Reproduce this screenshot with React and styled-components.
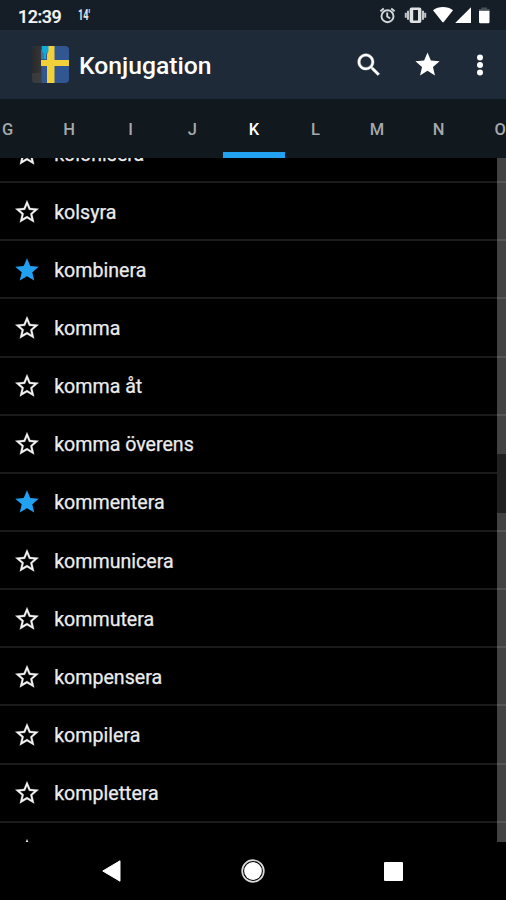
import styled, { createGlobalStyle } from "styled-components";

const tabs = ["G", "H", "I", "J", "K", "L", "M", "N", "O"];

const verbs = [
  { name: "kolonisera" },
  { name: "kolsyra" },
  { name: "kombinera", starred: true },
  { name: "komma" },
  { name: "komma åt" },
  { name: "komma överens" },
  { name: "kommentera", starred: true },
  { name: "kommunicera" },
  { name: "kommutera" },
  { name: "kompensera" },
  { name: "kompilera" },
  { name: "komplettera" },
  { name: "komplicera" },
];

const STAR =
  "M12 17.27L18.18 21l-1.64-7.03L22 9.24l-7.19-.61L12 2 9.19 8.63 2 9.24l5.46 4.73L5.82 21z";
const STAR_OUTLINE =
  "M22 9.24l-7.19-.62L12 2 9.19 8.63 2 9.24l5.46 4.73L5.82 21 12 17.27 18.18 21l-1.63-7.03L22 9.24zM12 15.4l-3.76 2.27 1-4.28-3.32-2.88 4.38-.38L12 6.1l1.71 4.04 4.38.38-3.32 2.88 1 4.28L12 15.4z";

function StatusIcons() {
  return (
    <svg width="112" height="20" viewBox="378 6 112 20" fill="#fff">
      {/* alarm */}
      <g fill="none" stroke="#d5d8da" strokeWidth="1.9">
        <circle cx="387.5" cy="16.2" r="6" />
        <path d="M387.2 12.5v4l3 2M380.4 11.2l3.4-2.8M394.6 11.2l-3.4-2.8" />
      </g>
      {/* vibrate */}
      <path
        fill="#dfe1e2"
        fillRule="evenodd"
        d="M411.6 7.6h7.800a2 2 0 0 1 2 2v11.400a2 2 0 0 1-2 2h-7.800a2 2 0 0 1-2-2V9.600a2 2 0 0 1 2-2zM413.200 10v10.600h4.800V10z"
      />
      <path
        d="M408 10.800v9M405.800 12.800v5M423 10.800v9M425.200 12.800v5"
        stroke="#c3c7ca"
        strokeWidth="2"
      />
      {/* wifi */}
      <path d="M433 10.200c5.600-4.200 14.400-4.200 20 0L443.500 22.300h-1z" />
      {/* signal */}
      <path d="M471 7.200V23h-15.800z" />
      {/* battery */}
      <path d="M479 10.600h10.500V22a1.200 1.200 0 0 1-1.200 1.200h-8.100A1.200 1.200 0 0 1 479 22z" />
      <path d="M481.500 7.400h5.500v1.600h2.500v1.600h-10.500V9h2.500z" fill="#46515a" />
    </svg>
  );
}

function AppIcon() {
  return (
    <svg width="37" height="37" viewBox="0 0 37 37">
      <defs>
        <linearGradient id="edge">
          <stop offset="0" stopColor="#26292e" />
          <stop offset="1" stopColor="#383634" />
        </linearGradient>
        <clipPath id="rounded">
          <rect width="37" height="37" rx="4" />
        </clipPath>
      </defs>
      <g clipPath="url(#rounded)">
        <rect width="37" height="37" fill="#315793" />
        <rect width="9.500" height="37" fill="url(#edge)" />
        <path d="M0 27h9.500v10H0z" fill="#444546" opacity="0.6" />
        <path d="M10 0h7v5l-3 3v5h-2L10 6z" fill="#12a9dc" />
        <path d="M9 3l3 5v5H9z" fill="#3977a6" />
        <path d="M16.500 0h6v14H37v6H22.500v17H15V20H9v-6h6V8l1.500-3z" fill="#f2d03a" />
      </g>
    </svg>
  );
}

function Star({ filled, size = 28 }) {
  return (
    <svg width={size} height={size} viewBox="0 0 24 24" fill="currentColor">
      <path d={filled ? STAR : STAR_OUTLINE} />
    </svg>
  );
}

function App() {
  return (
    <Screen>
      <GlobalStyle />
      <StatusBar>
        <Clock>12:39</Clock>
        <Temperature>14'</Temperature>
        <StatusIcons />
      </StatusBar>

      <Toolbar>
        <AppIcon />
        <Title>Konjugation</Title>
        <Actions>
          <Action $width={58}>
            <svg width="30" height="30" viewBox="0 0 24 24" fill="currentColor" stroke="currentColor" strokeWidth="0.300">
              <path d="M15.500 14h-.79l-.28-.27C15.410 12.590 16 11.110 16 9.500 16 5.910 13.090 3 9.500 3S3 5.910 3 9.500 5.910 16 9.500 16c1.610 0 3.090-.59 4.230-1.570l.27.28v.79l5 4.990L20.490 19l-4.990-5zm-6 0C7.010 14 5 11.990 5 9.500S7.010 5 9.500 5 14 7.010 14 9.500 11.990 14 9.500 14z" />
            </svg>
          </Action>
          <Action $width={60}>
            <Star filled size={29} />
          </Action>
          <Action $width={44}>
            <svg width="8" height="24" viewBox="0 0 8 24" fill="currentColor">
              <circle cx="4" cy="4.500" r="3" />
              <circle cx="4" cy="12" r="3" />
              <circle cx="4" cy="19.500" r="3" />
            </svg>
          </Action>
        </Actions>
      </Toolbar>

      <Tabs>
        {tabs.map((letter) => (
          <Tab key={letter} $active={letter === "K"}>
            {letter}
          </Tab>
        ))}
      </Tabs>

      <Content>
        <List>
          {verbs.map((verb) => (
            <Row key={verb.name}>
              <Favourite $on={verb.starred}>
                <Star filled={verb.starred} />
              </Favourite>
              <Verb>{verb.name}</Verb>
            </Row>
          ))}
        </List>
        <Scrollbar>
          <Thumb />
        </Scrollbar>
      </Content>

      <NavBar>
        <svg width="20" height="22" viewBox="0 0 20 22" fill="#fff">
          <path d="M18 .8v20.400L.8 11z" stroke="#fff" strokeLinejoin="round" />
        </svg>
        <svg width="24" height="24" viewBox="0 0 24 24">
          <circle cx="12" cy="12" r="10.800" fill="none" stroke="#dcdcdc" strokeWidth="1.700" />
          <circle cx="12" cy="12" r="8.900" fill="#fff" />
        </svg>
        <Recents />
      </NavBar>
    </Screen>
  );
}

export default App;

const GlobalStyle = createGlobalStyle`
  * {
    box-sizing: border-box;
  }

  body {
    margin: 0;
    background: #000;
    font-family: Roboto, sans-serif;
  }

  svg {
    display: block;
    flex-shrink: 0;
  }
`;

const Screen = styled.div`
  width: 506px;
  height: 900px;
  display: flex;
  flex-direction: column;
  overflow: hidden;
  background: #000;
  color: #fff;
`;

const StatusBar = styled.div`
  height: 30px;
  flex-shrink: 0;
  display: flex;
  align-items: center;
  padding: 2px 16px 0 18px;
  background: #151e27;

  svg {
    margin-left: auto;
  }
`;

const Clock = styled.div`
  width: 60px;
  font-size: 18px;
  letter-spacing: -0.5px;
  font-weight: 500;
  color: #f4f5f5;
  -webkit-text-stroke: 0.2px;
`;

const Temperature = styled.div`
  margin-top: -2px;
  font-size: 14px;
  font-weight: 700;
  color: #e2e4e5;
  transform: scaleX(0.66);
  transform-origin: left center;
`;

const Toolbar = styled.div`
  height: 69px;
  flex-shrink: 0;
  display: flex;
  align-items: center;
  padding-left: 32px;
  background: #1e2a38;
  border-bottom: 1px solid #1a2a3b;

  > svg {
    margin-top: 1px;
  }
`;

const Title = styled.div`
  margin: 3px 0 0 10px;
  font-size: 24.7px;
  font-weight: 500;
`;

const Actions = styled.div`
  display: flex;
  align-items: center;
  margin: 1px 0 0 auto;
`;

const Action = styled.div`
  width: ${({ $width }) => $width}px;
  display: flex;
  justify-content: center;
  margin-right: ${({ $width }) => ($width === 44 ? 4.5 : 0)}px;
`;

const Tabs = styled.div`
  height: 59px;
  flex-shrink: 0;
  display: flex;
  margin-left: -23.3px;
  background: #11181e;
`;

const Tab = styled.div`
  width: 61.6px;
  flex-shrink: 0;
  display: flex;
  align-items: center;
  justify-content: center;
  padding-top: 7px;
  border-bottom: 6px solid ${({ $active }) => ($active ? "#22a0f2" : "transparent")};
  font-size: 16.5px;
  font-weight: 500;
  color: ${({ $active }) => ($active ? "#fff" : "#a5a9ac")};
`;

const Content = styled.div`
  position: relative;
  height: 684px;
  flex-shrink: 0;
  overflow: hidden;
`;

const List = styled.div`
  margin-top: -33px;
`;

const Row = styled.div`
  height: 58.15px;
  display: flex;
  align-items: center;
  padding-left: 13.4px;
  border-bottom: 2px solid #1b1b1b;
`;

const Favourite = styled.div`
  width: 40.8px;
  padding-top: 1px;
  color: ${({ $on }) => ($on ? "#22a0f2" : "#f2f2f2")};

  path {
    stroke: currentColor;
    stroke-width: ${({ $on }) => ($on ? 0 : 0.2)};
  }
`;

const Verb = styled.div`
  padding-top: 2px;
  font-size: 19.6px;
  color: #ececec;
  -webkit-text-stroke: 0.25px;
`;

const Scrollbar = styled.div`
  position: absolute;
  top: 0;
  right: 0;
  width: 9px;
  height: 100%;
  padding-top: 296px;
  background: rgba(255, 255, 255, 0.26);
`;

const Thumb = styled.div`
  height: 59px;
  background: #212121;
`;

const NavBar = styled.div`
  flex: 1;
  display: flex;
  align-items: center;
  justify-content: space-between;
  padding: 0 103px 0 102px;
`;

const Recents = styled.div`
  width: 19px;
  height: 19px;
  border-radius: 1px;
  background: #fff;
`;
